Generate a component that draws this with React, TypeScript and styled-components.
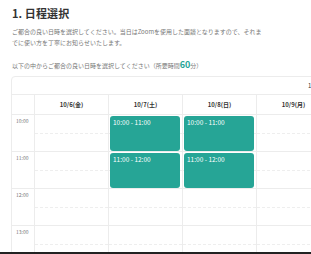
import React from "react";
import styled, { createGlobalStyle } from "styled-components";

const Global = createGlobalStyle`
  html, body { margin: 0; padding: 0; background: #fff; }
  body {
    width: 311px;
    height: 254px;
    overflow: hidden;
    font-family: "Noto Sans CJK JP", "Noto Sans", sans-serif;
    color: #333;
  }
`;

const TEAL = "#26a596";
const LINE = "#ececec";

const Page = styled.div`
  padding: 4px 0 0 12px;
  width: 420px;
`;

const Title = styled.h1`
  margin: 0;
  font-size: 11px;
  line-height: 18px;
  font-weight: 700;
  color: #333;
  letter-spacing: 0.1px;
`;

const Lead = styled.p`
  margin: 4px 0 0;
  width: 252px;
  font-size: 6px;
  line-height: 11px;
  color: #777;
`;

const Instruction = styled.p`
  margin: 11px 0 0;
  font-size: 6px;
  line-height: 11px;
  color: #777;
`;

const Minutes = styled.span`
  color: ${TEAL};
  font-weight: 700;
  font-size: 9px;
`;

const Card = styled.div`
  margin: 5px 0 0 -1px;
  border: 1px solid ${LINE};
  border-radius: 4px;
  width: 560px;
  overflow: hidden;
`;

const Toolbar = styled.div`
  height: 17px;
  display: flex;
  align-items: center;
  padding-left: 296px;
  font-size: 6px;
  color: #333;
  border-bottom: 1px solid ${LINE};
`;

const Row = styled.div`
  display: grid;
  grid-template-columns: 22px repeat(7, 74px);
`;

const HeadCell = styled.div`
  height: 19px;
  border-bottom: 1px solid ${LINE};
  border-left: 1px solid ${LINE};
  display: flex;
  align-items: center;
  justify-content: center;
  font-size: 6px;
  font-weight: 700;
  color: #333;
  &:first-child { border-left: none; }
`;

const TimeCell = styled.div`
  border-bottom: 1px solid ${LINE};
  padding: 3px 0 0 4px;
  height: 33px;
  font-size: 5px;
  line-height: 6px;
  color: #777;
`;

const SlotCell = styled.div`
  position: relative;
  height: 37px;
  border-bottom: 1px solid ${LINE};
  border-left: 1px solid ${LINE};
  padding: 1px 2px 0 1px;
  box-sizing: border-box;
  &::after {
    content: "";
    position: absolute;
    left: 0;
    right: 0;
    top: 18px;
    border-top: 1px dashed #eeeeee;
  }
`;

const Event = styled.div`
  position: relative;
  z-index: 1;
  height: 35px;
  box-sizing: border-box;
  background: ${TEAL};
  border-radius: 3px;
  color: #fff;
  font-size: 6.5px;
  line-height: 8px;
  padding: 2px 3px;
`;

const Bottom = styled.div`
  position: fixed;
  left: 0;
  right: 0;
  bottom: 0;
  height: 2px;
  background: #222;
`;

const days = ["10/6(金)", "10/7(土)", "10/8(日)", "10/9(月)", "10/10(火)", "10/11(水)", "10/12(木)"];
const hours = ["10:00", "11:00", "12:00", "13:00"];

const events: Record<string, string> = {
  "10:00-1": "10:00 - 11:00",
  "10:00-2": "10:00 - 11:00",
  "11:00-1": "11:00 - 12:00",
  "11:00-2": "11:00 - 12:00",
};

export default function App() {
  return (
    <>
      <Global />
      <Page>
        <Title>1. 日程選択</Title>
        <Lead>
          ご都合の良い日時を選択してください。当日はZoomを使用した面談となりますので、それまでに使い方を丁寧にお知らせいたします。
        </Lead>
        <Instruction>
          以下の中からご都合の良い日時を選択してください（所要時間<Minutes>60</Minutes>分）
        </Instruction>
        <Card>
          <Toolbar>10/6 – 10/12</Toolbar>
          <Row>
            <HeadCell />
            {days.map((d) => (
              <HeadCell key={d}>{d}</HeadCell>
            ))}
          </Row>
          {hours.map((h) => (
            <Row key={h}>
              <TimeCell>{h}</TimeCell>
              {days.map((d, i) => {
                const ev = events[`${h}-${i}`];
                return (
                  <SlotCell key={d}>{ev && <Event>{ev}</Event>}</SlotCell>
                );
              })}
            </Row>
          ))}
        </Card>
      </Page>
      <Bottom />
    </>
  );
}
